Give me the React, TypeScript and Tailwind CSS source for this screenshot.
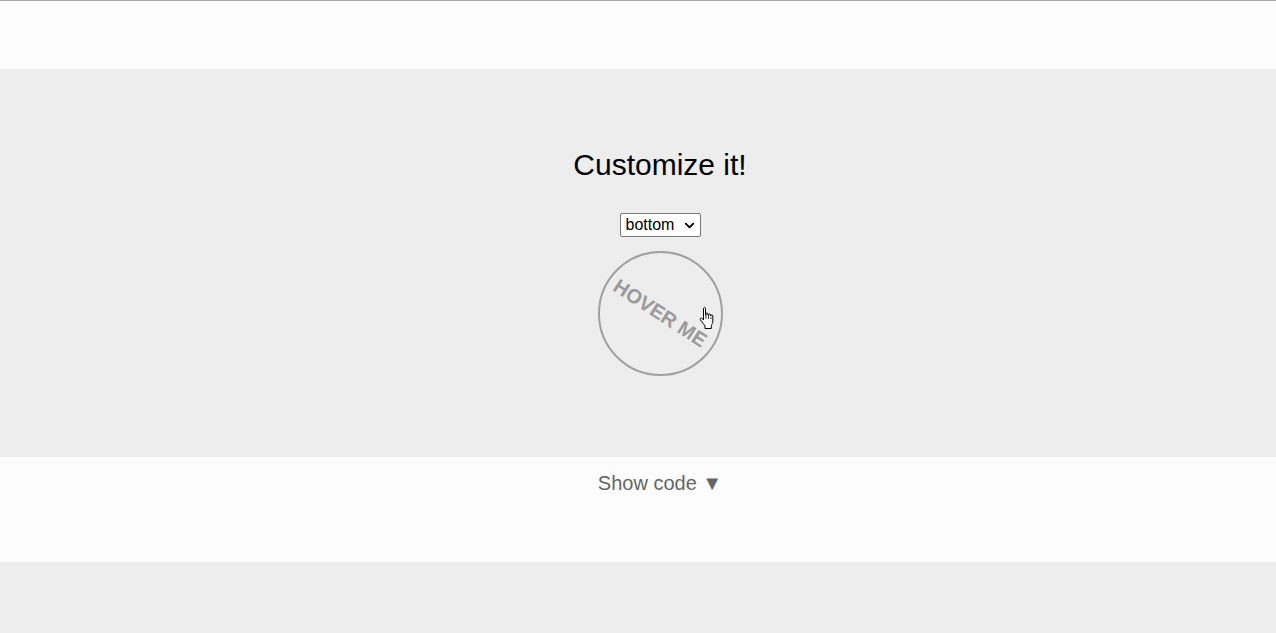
import { useState } from 'react';
import { ChevronDown } from 'lucide-react';

const HandCursor = () => (
  <svg width="17" height="23" viewBox="0 0 17 23" className="absolute left-[98px] top-[54px]">
    <path
      d="M5.5 1.5c0-.6.4-1 1-1s1 .4 1 1V8h.5V7c0-.6.4-1 1-1s1 .4 1 1v1.5h.5V8c0-.6.4-1 1-1s1 .4 1 1v1h.3c0-.6.4-1 1-1s1 .4 1 1V14c0 2-1 3.5-1.5 4.5V21.5H7V19C6 17.5 4 15 2.5 13c-.5-.7-.3-1.5.3-1.8.6-.3 1.3 0 1.7.5L5.5 13Z"
      fill="#fff"
      stroke="#000"
      strokeWidth="1"
      strokeLinejoin="round"
    />
    <path d="M8 8v4M10.5 9v3M13 10v2" stroke="#000" strokeWidth="0.8" />
  </svg>
);

export default function App() {
  const [side, setSide] = useState('bottom');

  return (
    <div className="min-h-[633px] bg-[#ededed] font-['Liberation_Sans',Arial,sans-serif]">
      <div className="h-[69px] bg-[#fcfcfc] border-t border-[#a9a9a9]" />

      <section className="flex flex-col items-center pl-[44px] pt-[79px] pb-[81px]">
        <h2 className="text-[30px] leading-[1.15] text-black">Customize it!</h2>

        <div className="relative mt-[30px]">
          <select
            value={side}
            onChange={(e) => setSide(e.target.value)}
            className="appearance-none block h-[24px] w-[81px] border border-[#767676] rounded-[2px] bg-white text-[16px] leading-[22px] text-black pl-[5px]"
          >
            <option value="top">top</option>
            <option value="right">right</option>
            <option value="bottom">bottom</option>
            <option value="left">left</option>
          </select>
          <ChevronDown
            size={15}
            strokeWidth={3}
            className="absolute right-[4px] top-[5px] text-black pointer-events-none"
          />
        </div>

        <div className="relative mt-[14px] w-[125px] h-[125px] rounded-full border-2 border-[#a0a0a0] flex items-center justify-center">
          <span className="rotate-[33deg] text-[20px] font-bold text-[#9a9a9a] whitespace-nowrap">
            HOVER ME
          </span>
          <HandCursor />
        </div>
      </section>

      <div className="h-[105px] bg-[#fcfcfc] flex justify-center pl-[44px] pt-[15px]">
        <button className="text-[20px] leading-[1.15] text-[#666] h-fit">
          Show code ▼
        </button>
      </div>
    </div>
  );
}
